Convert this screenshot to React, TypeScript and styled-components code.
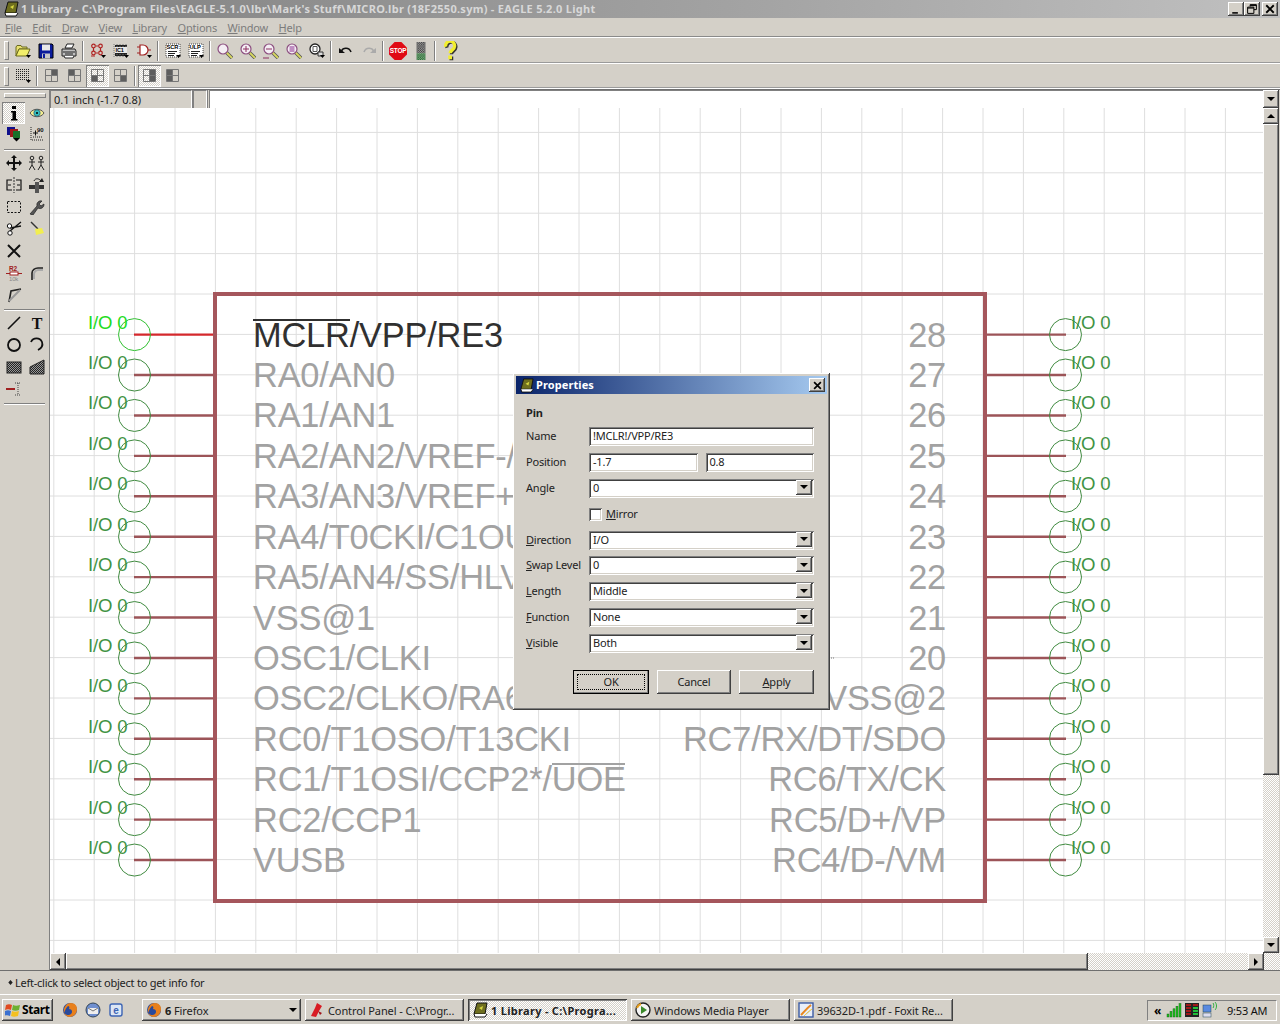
import React, { FunctionComponent, ReactNode } from 'react';
import styled, { createGlobalStyle, css } from 'styled-components';

const FACE = '#d4d0c8';
const UI_FONT = '"Noto Sans", "DejaVu Sans", sans-serif';

const raised = css`
  box-shadow: inset -1px -1px #404040, inset 1px 1px #fff, inset -2px -2px #808080, inset 2px 2px ${FACE};
`;
const sunken = css`
  box-shadow: inset 1px 1px #808080, inset -1px -1px #fff, inset 2px 2px #404040, inset -2px -2px ${FACE};
`;
const dither = css`
  background: repeating-conic-gradient(#fff 0 25%, ${FACE} 0 50%) 0 0 / 2px 2px;
`;

const GlobalStyle = createGlobalStyle`
  html, body {
    margin: 0;
    padding: 0;
    background: ${FACE};
  }
  * {
    box-sizing: border-box;
  }
`;

const Screen = styled.div`
  width: 1280px;
  height: 1024px;
  display: flex;
  flex-direction: column;
  overflow: hidden;
  background: ${FACE};
  font: 11px ${UI_FONT};
  letter-spacing: -0.2px;
  color: #222;
`;

/* title and menu */

const TitleBar = styled.div`
  height: 18px;
  flex: none;
  display: flex;
  align-items: center;
  padding: 0 2px 0 3px;
  background: linear-gradient(90deg, #808080 0%, #a4a4a4 60%, #c0c0c0 100%);
`;

const TitleText = styled.span`
  flex: 1;
  margin-left: 2px;
  padding-bottom: 1px;
  color: #d8d8d8;
  font-weight: 700;
  letter-spacing: 0.28px;
  white-space: nowrap;
`;

const CaptionButton = styled.div<{ $gap?: number }>`
  width: 16px;
  height: 14px;
  margin-left: ${({ $gap }) => $gap ?? 0}px;
  display: flex;
  align-items: center;
  justify-content: center;
  background: ${FACE};
  ${raised};
`;

const MenuBar = styled.div`
  height: 20px;
  flex: none;
  display: flex;
  align-items: center;
  padding-left: 5px;
  gap: 10.5px;
  color: #7c7c7c;
  border-bottom: 1px solid #fff;
  box-shadow: inset 0 -1px #8a8a8a;
`;

const ToolRow = styled.div<{ $height: number }>`
  height: ${({ $height }) => $height}px;
  flex: none;
  display: flex;
  align-items: center;
  padding-left: 4px;
  border-bottom: 1px solid #fff;
  box-shadow: inset 0 -1px #9a9a9a;
`;

const Grip = styled.div`
  width: 5px;
  height: 19px;
  margin-right: 2px;
  border: 1px solid;
  border-color: #fff #808080 #808080 #fff;
`;

const ToolButton = styled.div<{ $pressed?: boolean }>`
  width: 23px;
  height: 22px;
  flex: none;
  display: flex;
  align-items: center;
  justify-content: center;
  ${({ $pressed }) =>
    $pressed &&
    css`
      ${dither};
      box-shadow: inset 1px 1px #808080, inset -1px -1px #fff;
    `}
`;

const ToolSep = styled.div`
  width: 2px;
  height: 20px;
  margin: 0 2px;
  flex: none;
  border-left: 1px solid #808080;
  border-right: 1px solid #fff;
`;

const Ico = styled.svg.attrs({ viewBox: '0 0 16 16' })<{ $size?: number }>`
  width: ${({ $size }) => $size ?? 16}px;
  height: ${({ $size }) => $size ?? 16}px;
  flex: none;
  display: block;
`;

/* main area */

const MainArea = styled.div`
  flex: 1;
  display: flex;
  min-height: 0;
  border-top: 1px solid #6f6f6f;
`;

const SideBar = styled.div`
  width: 50px;
  flex: none;
  display: flex;
  flex-direction: column;
  align-items: stretch;
  padding-top: 3px;
  border-right: 1px solid #808080;
`;

const SideGrip = styled.div`
  height: 5px;
  margin: 0 3px 4px 4px;
  border: 1px solid;
  border-color: #fff #808080 #808080 #fff;
`;

const SideGrid = styled.div<{ $rowHeight: number; $after?: number }>`
  display: grid;
  grid-template-columns: 23px 23px;
  grid-auto-rows: ${({ $rowHeight }) => $rowHeight}px;
  padding-left: 2px;
  margin-bottom: ${({ $after }) => $after ?? 0}px;
`;

const SideSep = styled.div`
  height: 2px;
  margin: 3px 4px 1px;
  border-top: 1px solid #808080;
  border-bottom: 1px solid #fff;
`;

const DrawColumn = styled.div`
  flex: 1;
  min-width: 0;
  display: flex;
  flex-direction: column;
`;

const CommandRow = styled.div`
  height: 18px;
  flex: none;
  display: flex;
  padding-right: 1px;
`;

const CoordBox = styled.div<{ $width: number }>`
  width: ${({ $width }) => $width}px;
  flex: none;
  padding: 1px 0 0 3px;
  letter-spacing: 0;
  border-top: 1px solid #808080;
  border-left: 1px solid #808080;
  border-right: 1px solid #fff;
  box-shadow: 1px 0 #808080;
  margin-right: 1px;
  white-space: nowrap;
`;

const CommandInput = styled.div`
  flex: 1;
  background: #fff;
  border-top: 1px solid #808080;
  border-left: 1px solid #808080;
  margin-left: 1px;
`;

const ArrowButton = styled.div<{ $w?: number; $h?: number }>`
  width: ${({ $w }) => $w ?? 16}px;
  height: ${({ $h }) => $h ?? 16}px;
  flex: none;
  display: flex;
  align-items: center;
  justify-content: center;
  background: ${FACE};
  ${raised};
`;

const Arrow = styled.div<{ $dir: 'up' | 'down' | 'left' | 'right' }>`
  width: 0;
  height: 0;
  flex: none;
  border: 4px solid transparent;
  ${({ $dir }) =>
    $dir === 'up'
      ? 'border-bottom-color:#000;border-top-width:0;'
      : $dir === 'down'
      ? 'border-top-color:#000;border-bottom-width:0;'
      : $dir === 'left'
      ? 'border-right-color:#000;border-left-width:0;'
      : 'border-left-color:#000;border-right-width:0;'}
`;

const CanvasRow = styled.div`
  flex: 1;
  display: flex;
  min-height: 0;
  padding-right: 1px;
`;

const Canvas = styled.div`
  position: relative;
  flex: 1;
  min-width: 0;
  background: #fff;
`;

const SchematicSvg = styled.svg`
  position: absolute;
  inset: 0;
  width: 100%;
  height: 100%;
  display: block;
`;

const VScroll = styled.div`
  width: 16px;
  flex: none;
  display: flex;
  flex-direction: column;
  ${dither};
`;

const VThumb = styled.div`
  height: 651px;
  flex: none;
  background: ${FACE};
  ${raised};
`;

const ScrollFill = styled.div`
  flex: 1;
`;

const HScroll = styled.div`
  height: 17px;
  flex: none;
  display: flex;
  padding-right: 16px;
  ${dither};
  background-color: ${FACE};
`;

const HThumb = styled.div`
  width: 1022px;
  flex: none;
  background: ${FACE};
  ${raised};
`;

const StatusBar = styled.div`
  height: 25px;
  flex: none;
  display: flex;
  align-items: center;
  padding-left: 8px;
  gap: 2px;
  letter-spacing: -0.25px;
  border-top: 1px solid #6f6f6f;
  border-bottom: 1px solid #fff;
`;

/* dialog */

const Dialog = styled.div`
  position: absolute;
  left: 463px;
  top: 265px;
  width: 317px;
  height: 337px;
  padding: 3px;
  background: ${FACE};
  ${raised};
`;

const DialogTitle = styled.div`
  height: 18px;
  display: flex;
  align-items: center;
  padding: 0 2px 0 3px;
  gap: 2px;
  color: #fff;
  font-weight: 700;
  letter-spacing: 0.1px;
  background: linear-gradient(90deg, #0a246a, #a6caf0);
`;

const DialogTitleText = styled.span`
  flex: 1;
  padding-bottom: 1px;
`;

const DialogBody = styled.div`
  padding: 12px 13px 0 10px;
`;

const GroupLabel = styled.div`
  height: 14px;
  font-weight: 700;
  line-height: 14px;
  margin-bottom: 7px;
`;

const FormGrid = styled.div`
  display: grid;
  grid-template-columns: 63px 1fr;
  grid-auto-rows: 19px;
  row-gap: 6.875px;
  align-items: center;
`;

const FieldLabel = styled.div`
  padding-bottom: 2px;
  white-space: nowrap;
`;

const FieldPair = styled.div`
  display: flex;
  gap: 8px;
`;

const TextField = styled.div`
  flex: 1;
  height: 19px;
  padding: 1px 0 0 4px;
  line-height: 15px;
  background: #fff;
  white-space: nowrap;
  ${sunken};
`;

const SelectField = styled(TextField)`
  display: flex;
  justify-content: space-between;
  padding: 1px 2px 2px 4px;
`;

const CheckRow = styled.div`
  grid-column: 2;
  display: flex;
  align-items: center;
  gap: 4px;
`;

const CheckBox = styled.div`
  width: 13px;
  height: 13px;
  background: #fff;
  ${sunken};
`;

const CheckText = styled.span`
  padding-bottom: 2px;
`;

const ButtonRow = styled.div`
  display: flex;
  justify-content: flex-end;
  gap: 8px;
  margin-top: 17px;
`;

const PushButton = styled.div<{ $width: number; $default?: boolean }>`
  position: relative;
  width: ${({ $width }) => $width}px;
  height: 24px;
  display: flex;
  align-items: center;
  justify-content: center;
  padding-bottom: 2px;
  background: ${FACE};
  ${raised};
  ${({ $default }) =>
    $default &&
    css`
      outline: 1px solid #000;
      outline-offset: -1px;
      &::after {
        content: '';
        position: absolute;
        inset: 4px;
        border: 1px dotted #000;
      }
    `}
`;

/* taskbar */

const TaskBar = styled.div`
  height: 29px;
  flex: none;
  display: flex;
  align-items: center;
  padding: 1px 3px 0 2px;
  gap: 4px;
`;

const StartButton = styled.div`
  width: 51px;
  height: 22px;
  flex: none;
  display: flex;
  align-items: center;
  gap: 1px;
  padding: 0 0 1px 3px;
  font-weight: 700;
  font-size: 12px;
  letter-spacing: -0.4px;
  color: #000;
  background: ${FACE};
  ${raised};
`;

const QuickLaunch = styled.div`
  width: 81px;
  flex: none;
  display: flex;
  align-items: center;
  gap: 7px;
  padding-left: 5px;
`;

const TaskButton = styled.div<{ $active?: boolean }>`
  width: 159px;
  height: 22px;
  flex: none;
  display: flex;
  align-items: center;
  gap: 3px;
  padding: 0 4px;
  letter-spacing: -0.1px;
  white-space: nowrap;
  overflow: hidden;
  ${({ $active }) =>
    $active
      ? css`
          ${dither};
          font-weight: 700;
          letter-spacing: 0.3px;
          box-shadow: inset 1px 1px #404040, inset -1px -1px #fff, inset 2px 2px #808080;
        `
      : css`
          background: ${FACE};
          ${raised};
        `}
`;

const TaskLabel = styled.span`
  flex: 1;
  overflow: hidden;
`;

const Tray = styled.div`
  margin-left: auto;
  width: 130px;
  height: 21px;
  flex: none;
  display: flex;
  align-items: center;
  padding-left: 6px;
  gap: 2px;
  border: 1px solid;
  border-color: #808080 #fff #fff #808080;
`;

const TrayChevron = styled.span`
  width: 10px;
  font-weight: 700;
  font-size: 12px;
  color: #000;
`;

const Clock = styled.span`
  margin-left: 7px;
  color: #111;
  white-space: nowrap;
`;

/* icons */

const Drop = () => <path d="M11 12h5l-2.5 3z" fill="#000" />;

const Checker: FunctionComponent<{ id: string; dark: string; light: string }> = ({ id, dark, light }) => (
  <defs>
    <pattern id={id} width="2" height="2" patternUnits="userSpaceOnUse">
      <rect width="2" height="2" fill={light} />
      <rect width="1" height="1" fill={dark} />
      <rect x="1" y="1" width="1" height="1" fill={dark} />
    </pattern>
  </defs>
);

const FolderIcon = () => (
  <Ico>
    <path d="M1 4l1-1.5h4L7 4h5v2H4L1 13z" fill="#e8e070" stroke="#6a6a20" />
    <path d="M1 13l3-7h11l-3 7z" fill="#f2ee6a" stroke="#6a6a20" />
    <Drop />
  </Ico>
);
const SaveIcon = () => (
  <Ico>
    <path d="M1 1h13l1 1v13H1z" fill="#0c1c9c" stroke="#000" />
    <path d="M4 1.5h8v6H4z" fill="#e8e8e8" />
    <path d="M4 10.5h8v5H4z" fill="#c8c8c8" />
    <path d="M5 11h2v4H5z" fill="#0c1c9c" />
  </Ico>
);
const PrintIcon = () => (
  <Ico>
    <path d="M4 5l2-4h7l-2 4z" fill="#fff" stroke="#222" />
    <path d="M1 6h13l1 2v5H1z" fill="#c0c0c0" stroke="#222" />
    <path d="M2 9h12M4 11h8" stroke="#222" />
    <path d="M3 13l1 2h8l1-2" fill="#fff" stroke="#222" />
  </Ico>
);
const PartsIcon = () => (
  <Ico>
    <g fill="none" stroke="#b02020" strokeWidth="1.2">
      <circle cx="3.5" cy="3" r="1.8" />
      <circle cx="3.5" cy="10" r="1.8" />
      <circle cx="10.5" cy="3" r="1.8" />
      <circle cx="10.5" cy="10" r="1.8" />
      <path d="M6 3h2M6 10h2M3.5 5v3M10.5 5v3M1 13h4" />
    </g>
    <Drop />
  </Ico>
);
const ChipIcon = () => (
  <Ico>
    <path d="M2 2h12v11H2z" fill="#222" />
    <path d="M1 1v14M4 1v14M7 1v14M10 1v14M13 1v14" stroke="#777" strokeDasharray="1 1" />
    <path d="M2 4h12v6H2z" fill="#e8e8e8" />
    <text x="2.6" y="9" fontSize="5.5" fontWeight="700" fontFamily="Liberation Sans" fill="#000">IC1</text>
    <Drop />
  </Ico>
);
const GateIcon = () => (
  <Ico>
    <path d="M4 2h3a5 5 0 010 10H4z" fill="#fff" stroke="#a02020" strokeWidth="1.2" />
    <path d="M1 4h3M1 10h3M12 7h3" stroke="#a02020" />
    <Drop />
  </Ico>
);
const DocIcon: FunctionComponent<{ label: string }> = ({ label }) => (
  <Ico>
    <path d="M1 1h14v13H1z" fill="#fff" stroke="#444" strokeDasharray="1 1" />
    <text x="1.6" y="6.4" fontSize="5.8" fontWeight="700" fontFamily="Liberation Sans" fill="#000">{label}</text>
    <path d="M3 8.5h9M3 10.5h7M3 12.5h6" stroke="#222" />
    <Drop />
  </Ico>
);
const Lens: FunctionComponent<{ children?: ReactNode }> = ({ children }) => (
  <Ico>
    <path d="M9.5 9.5L15 15" stroke="#555" strokeWidth="3.4" />
    <path d="M9.5 9.5L15 15" stroke="#d8d860" strokeWidth="1.8" />
    <circle cx="6" cy="6" r="5" fill="#f4eef4" stroke="#8c4f80" strokeWidth="1.2" />
    {children}
  </Ico>
);
const SelectZoomIcon = () => (
  <Ico>
    <circle cx="6" cy="6" r="5" fill="#fff" stroke="#222" strokeWidth="1.3" />
    <path d="M4 3.5h4v5H4z" fill="none" stroke="#555" />
    <path d="M9 9h5v4H9z" fill="#ddd" stroke="#333" />
    <Drop />
  </Ico>
);
const UndoIcon = () => (
  <Ico>
    <path d="M3.5 8C5 4.5 11 4 13 9" fill="none" stroke="#111" strokeWidth="1.6" />
    <path d="M1 5l6 5H1z" fill="#111" />
  </Ico>
);
const RedoIcon = () => (
  <Ico>
    <path d="M12.5 8C11 4.5 5 4 3 9" fill="none" stroke="#aaa" strokeWidth="1.6" />
    <path d="M15 5l-6 5h6z" fill="#aaa" />
  </Ico>
);
const StopIcon = () => (
  <Ico $size={18}>
    <path d="M5 0h6l5 5v6l-5 5H5l-5-5V5z" fill="#e00a14" />
    <text x="8" y="10" textAnchor="middle" fontSize="5.8" fontWeight="700" fontFamily="Liberation Sans" fill="#fff">STOP</text>
  </Ico>
);
const DitherSignalIcon = () => (
  <Ico $size={18}>
    <Checker id="signal-top" dark="#333" light="#aaa" />
    <Checker id="signal-bottom" dark="#1c5c2c" light="#8ab88a" />
    <path d="M4 0h8v10H4z" fill="url(#signal-top)" />
    <path d="M4 10h8v6H4z" fill="url(#signal-bottom)" />
  </Ico>
);
const HelpIcon = () => (
  <Ico $size={20}>
    <g fill="none" strokeWidth="2.6">
      <path d="M5.6 5.4a3.6 3.6 0 117 0c0 2.4-3.5 2.6-3.5 5.2" stroke="#333" />
      <path d="M4.6 4.6a3.6 3.6 0 117 0c0 2.4-3.5 2.6-3.5 5.2" stroke="#f2ee30" />
    </g>
    <rect x="7.6" y="12.4" width="3" height="3" fill="#333" />
    <rect x="6.6" y="11.6" width="3" height="3" fill="#f2ee30" />
  </Ico>
);
const GridIcon = () => (
  <Ico>
    {[0, 1, 2, 3, 4, 5].map(r =>
      [0, 1, 2, 3, 4, 5, 6].map(c => <rect key={`${r}-${c}`} x={1 + c * 2} y={1 + r * 2} width="1" height="1" fill="#222" />)
    )}
    <Drop />
  </Ico>
);
const QuadIcon: FunctionComponent<{ fill: string }> = ({ fill }) => (
  <Ico>
    <path d={fill} fill="#5e5e5e" />
    <path d="M1.5 1.5h12v12h-12zM7.5 1.5v12M1.5 7.5h12" fill="none" stroke="#777" />
  </Ico>
);

const InfoIcon = () => (
  <Ico>
    <rect x="6" y="1" width="4" height="3" fill="#000" />
    <path d="M5 6h5v8h1.5v1.5h-6.5V14H6.5V7.5H5z" fill="#000" />
  </Ico>
);
const EyeIcon = () => (
  <Ico>
    <path d="M1 8c3-5 11-5 14 0-3 5-11 5-14 0z" fill="#f4ee90" stroke="#555" />
    <circle cx="8" cy="8" r="3.2" fill="#36c0c0" stroke="#246" strokeWidth=".6" />
    <circle cx="8" cy="8" r="1" fill="#000" />
  </Ico>
);
const LayersIcon = () => (
  <Ico>
    <rect x="1" y="1" width="8" height="8" fill="#10108c" />
    <rect x="4" y="3" width="8" height="8" fill="#9c1818" />
    <rect x="7" y="5" width="7" height="7" fill="#187028" />
    <path d="M7 12h7l-3.5 3.5z" fill="#000" />
  </Ico>
);
const CoordsIcon = () => (
  <Ico>
    <path d="M2 1v13h13" fill="none" stroke="#222" strokeDasharray="1 1" />
    <path d="M4 7h5M6.5 4.5v5" stroke="#111" />
    <text x="8" y="5.5" fontSize="6" fontWeight="700" fontFamily="Liberation Sans" fill="#111">90</text>
    <path d="M4 11h9" stroke="#222" strokeDasharray="1 1" />
  </Ico>
);
const MoveIcon = () => (
  <Ico>
    <path d="M8 0l3 3H9v4h4V5l3 3-3 3V9H9v4h2l-3 3-3-3h2V9H3v2L0 8l3-3v2h4V3H5z" fill="#111" />
  </Ico>
);
const CopyIcon = () => (
  <Ico>
    {[3, 12].map(x => (
      <g key={x} fill="none" stroke="#222">
        <circle cx={x} cy="3" r="1.8" />
        <path d={`M${x} 5v5M${x - 3} 7h6M${x} 10l-3 5M${x} 10l3 5`} />
      </g>
    ))}
  </Ico>
);
const MirrorIcon = () => (
  <Ico>
    <path d="M8 0v16" stroke="#333" strokeDasharray="2 1" />
    <path d="M6 3H1v10h5M2 8h3" fill="none" stroke="#111" strokeWidth="1.2" />
    <path d="M10 3h5v10h-5M14 8h-3" fill="none" stroke="#111" strokeWidth="1.2" />
  </Ico>
);
const RotateIcon = () => (
  <Ico>
    <path d="M0 8h15v4H0z" fill="#333" />
    <path d="M6 5h4v11H6z" fill="#555" />
    <path d="M5 4C6 1 10 1 12 4" fill="none" stroke="#222" />
    <path d="M10 5h5l-2-4z" fill="#222" />
  </Ico>
);
const GroupIcon = () => (
  <Ico>
    <rect x="1.5" y="2.5" width="13" height="11" fill="none" stroke="#111" strokeDasharray="2 1.5" />
  </Ico>
);
const WrenchIcon = () => (
  <Ico>
    <path d="M1 15l7-8a4 4 0 015-5l-3 3 2 2 3-2a4 4 0 01-6 4l-5 7z" fill="#555" stroke="#222" strokeWidth=".7" />
  </Ico>
);
const CutIcon = () => (
  <Ico>
    <path d="M15 1L4 10M15 5L4 7" stroke="#111" strokeWidth="1.3" />
    <circle cx="3.5" cy="5" r="2.2" fill="#fff" stroke="#111" />
    <circle cx="4" cy="12" r="2.2" fill="#fff" stroke="#111" />
  </Ico>
);
const PaintIcon = () => (
  <Ico>
    <path d="M2 1l7 7" stroke="#333" strokeWidth="1.4" />
    <path d="M6 8l7-1 2 5-8 2z" fill="#f2ee50" />
  </Ico>
);
const DeleteIcon = () => (
  <Ico>
    <path d="M2 2l12 12M14 2L2 14" stroke="#111" strokeWidth="2" />
  </Ico>
);
const ValueIcon = () => (
  <Ico>
    <text x="3" y="6" fontSize="6.5" fontWeight="700" fontFamily="Liberation Sans" fill="#a02020">R2</text>
    <path d="M0 8.5h4M12 8.5h4" stroke="#a02020" />
    <rect x="4" y="7" width="8" height="3" fill="#fff" stroke="#a02020" />
    <text x="3" y="15.5" fontSize="6" fontFamily="Liberation Sans" fill="#888">10k</text>
  </Ico>
);
const MiterIcon = () => (
  <Ico>
    <path d="M3 15V8c0-3 3-5 6-5h5" fill="none" stroke="#222" strokeWidth="1.6" />
    <path d="M5 14V9c0-2 2-4 4-4h5" fill="none" stroke="#aaa" strokeWidth="2" />
  </Ico>
);
const SplitIcon = () => (
  <Ico>
    <path d="M3 15L5 4l10-2" fill="none" stroke="#222" strokeWidth="1.6" />
    <path d="M3 14L14 3" stroke="#999" strokeWidth="2" />
  </Ico>
);
const LineIcon = () => (
  <Ico>
    <path d="M2 14L14 2" stroke="#111" strokeWidth="1.6" />
  </Ico>
);
const TextIcon = () => (
  <Ico>
    <text x="8" y="14" textAnchor="middle" fontSize="16" fontWeight="700" fontFamily="Liberation Serif" fill="#111">T</text>
  </Ico>
);
const CircleIcon = () => (
  <Ico>
    <circle cx="8" cy="8" r="6" fill="none" stroke="#111" strokeWidth="1.8" />
  </Ico>
);
const ArcIcon = () => (
  <Ico>
    <path d="M2 5a6 6 0 0111 0c1 3 0 6-4 8" fill="none" stroke="#111" strokeWidth="1.8" />
  </Ico>
);
const RectIcon = () => (
  <Ico>
    <Checker id="rect-fill" dark="#222" light="#999" />
    <rect x="1" y="3" width="14" height="11" fill="url(#rect-fill)" stroke="#222" />
  </Ico>
);
const PolygonIcon = () => (
  <Ico>
    <Checker id="poly-fill" dark="#222" light="#999" />
    <path d="M1 15V8l6-3 8-4v14z" fill="url(#poly-fill)" stroke="#222" />
  </Ico>
);
const PinIcon = () => (
  <Ico>
    <path d="M0 8h9" stroke="#a02020" strokeWidth="2" />
    <path d="M9 2h5M12 2v12M9 14h5" stroke="#444" strokeDasharray="1 1" fill="none" />
  </Ico>
);

const EagleIcon: FunctionComponent<{ size?: number }> = ({ size }) => (
  <Ico $size={size}>
    <path d="M5 1h10l-2 11H2z" fill="#6e6e1e" stroke="#111" />
    <path d="M2 12l1 3h10l2-3" fill="#fff" stroke="#111" />
    <path d="M7 6l4-2-1 4z" fill="#d8d840" />
  </Ico>
);
const FlagIcon = () => (
  <Ico>
    <path d="M1 3c2-1 4-1 6 0l-1 5C4 7 2 7 0 8z" fill="#e04a20" />
    <path d="M8 3c2 1 4 1 7 0l-1 5c-2 1-5 1-7 0z" fill="#6cb030" />
    <path d="M0 9c2-1 4-1 6 0l-1 5c-2-1-4-1-6 0z" fill="#3a70d0" />
    <path d="M7 9c2 1 4 1 7 0l-1 5c-3 1-5 1-7 0z" fill="#f4c020" />
  </Ico>
);
const FirefoxIcon = () => (
  <Ico>
    <circle cx="8" cy="8" r="7" fill="#2a4a9c" />
    <path d="M2 11C1 6 4 1 9 1c4 0 6 3 6 6 0 5-4 8-7 8-3 0-5-2-6-4 2 2 5 3 7 1 2-2 1-5-2-5 1-2 0-3-1-3-2 2-3 4-4 7z" fill="#e8801c" />
  </Ico>
);
const MailIcon = () => (
  <Ico>
    <circle cx="8" cy="8" r="7" fill="#6f8fd0" stroke="#345" />
    <path d="M3 6h10v6H3z" fill="#eee" />
    <path d="M3 6l5 3 5-3" fill="none" stroke="#777" />
  </Ico>
);
const PageIcon = () => (
  <Ico>
    <rect x="2" y="2" width="12" height="12" rx="2" fill="#dce6f4" stroke="#3c64b4" strokeWidth="1.4" />
    <text x="8" y="12" textAnchor="middle" fontSize="10" fontWeight="700" fontFamily="Liberation Sans" fill="#3c64b4">e</text>
  </Ico>
);
const ControlIcon = () => (
  <Ico>
    <path d="M2 14l4-8 2-5 5 3-3 5-3 6z" fill="#d81c24" />
    <path d="M9 9l4 2-2 2z" fill="#a01018" />
  </Ico>
);
const MediaIcon = () => (
  <Ico>
    <circle cx="8" cy="8" r="7" fill="#f4f4f4" stroke="#222" strokeWidth="1.4" />
    <path d="M6 4l6 4-6 4z" fill="#3a8a2a" />
    <path d="M2 6a6 6 0 014-4" fill="none" stroke="#e8a020" strokeWidth="2" />
  </Ico>
);
const FoxitIcon = () => (
  <Ico>
    <rect x="1" y="1" width="14" height="14" fill="#e8eef8" stroke="#3c5ca4" strokeWidth="1.4" />
    <path d="M3 13C6 10 9 6 13 3" stroke="#e88820" strokeWidth="2" />
    <path d="M6 14c2-2 5-5 8-7" stroke="#f4d040" />
  </Ico>
);
const SignalIcon = () => (
  <Ico>
    {[0, 1, 2, 3, 4].map(i => (
      <rect key={i} x={1 + i * 3} y={12 - i * 2.6} width="2" height={3 + i * 2.6} fill="#22c022" stroke="#0a5a0a" strokeWidth=".4" />
    ))}
  </Ico>
);
const MeterIcon = () => (
  <Ico>
    <rect x="1" y="1" width="14" height="14" fill="#222" />
    {[2, 5, 8, 11].map(y => (
      <g key={y}>
        <rect x="2" y={y} width="5" height="2" fill="#a01818" />
        <rect x="9" y={y} width="5" height="2" fill={y > 3 ? '#22c03a' : '#a01818'} />
      </g>
    ))}
  </Ico>
);
const NetIcon = () => (
  <Ico>
    <rect x="1" y="3" width="8" height="7" fill="#5a8ae0" stroke="#245" strokeWidth=".5" />
    <rect x="1" y="11" width="8" height="4" fill="#dde" stroke="#245" strokeWidth=".5" />
    <path d="M11 1c1 1 1 4 0 5M13 0c2 2 2 6 0 8" fill="none" stroke="#30b040" />
  </Ico>
);

/* schematic data */

const GRID_X = Array.from({ length: 31 }, (_, i) => 53.8 + i * 40.4);
const GRID_Y = Array.from({ length: 21 }, (_, i) => 132.4 + i * 40.4);

const LEFT_NAMES = [
  'MCLR/VPP/RE3',
  'RA0/AN0',
  'RA1/AN1',
  'RA2/AN2/VREF-/',
  'RA3/AN3/VREF+',
  'RA4/T0CKI/C1OU',
  'RA5/AN4/SS/HLV',
  'VSS@1',
  'OSC1/CLKI',
  'OSC2/CLKO/RA6',
  'RC0/T1OSO/T13CKI',
  'RC1/T1OSI/CCP2*/UOE',
  'RC2/CCP1',
  'VUSB',
];

const RIGHT_NAMES = [
  '28', '27', '26', '25', '24', '23', '22', '21', '20',
  'VSS@2', 'RC7/RX/DT/SDO', 'RC6/TX/CK', 'RC5/D+/VP', 'RC4/D-/VM',
];

const PIN_Y = LEFT_NAMES.map((_, i) => 334.6 + i * 40.42);

const Schematic = () => (
  <SchematicSvg viewBox="50 108 1213 845" fontFamily="Liberation Sans, Arial, sans-serif">
    {GRID_X.map(x => (
      <line key={x} x1={x} x2={x} y1={108} y2={953} stroke="#dedede" />
    ))}
    {GRID_Y.map(y => (
      <line key={y} x1={50} x2={1263} y1={y} y2={y} stroke="#dedede" />
    ))}
    {PIN_Y.map((y, i) => (
      <g key={y}>
        <line x1={134} x2={215} y1={y} y2={y} stroke={i === 0 ? '#d4282c' : '#9c5458'} strokeWidth="2.4" />
        <line x1={985} x2={1066} y1={y} y2={y} stroke="#9c5458" strokeWidth="2.4" />
        <circle cx={134.5} cy={y} r={16} fill="none" stroke={i === 0 ? '#30c030' : '#3f8a3f'} />
        <circle cx={1065.5} cy={y} r={16} fill="none" stroke="#3f8a3f" />
        <text x={88} y={y - 6} fontSize="18.6" fill={i === 0 ? '#22dc22' : '#3f9344'}>I/O 0</text>
        <text x={1071} y={y - 6} fontSize="18.6" fill="#3f9344">I/O 0</text>
        <text x={253} y={y + 12} fontSize="34.4" fill={i === 0 ? '#303030' : '#a2a2a2'}>{LEFT_NAMES[i]}</text>
        <text x={946} y={y + 12} fontSize="34.4" fill="#a2a2a2" textAnchor="end">{RIGHT_NAMES[i]}</text>
      </g>
    ))}
    <rect x={215} y={294} width={770} height={607} fill="none" stroke="#a5565c" strokeWidth="4" />
    <line x1={253} x2={350} y1={320} y2={320} stroke="#303030" strokeWidth="2" />
    <line x1={552} x2={625} y1={764} y2={764} stroke="#a2a2a2" strokeWidth="2" />
    <line x1={829} x2={834} y1={658} y2={658} stroke="#777" strokeDasharray="1 1" />
  </SchematicSvg>
);

const SELECTS: { label: ReactNode; value: string }[] = [
  { label: <><u>D</u>irection</>, value: 'I/O' },
  { label: <><u>S</u>wap Level</>, value: '0' },
  { label: <><u>L</u>ength</>, value: 'Middle' },
  { label: <><u>F</u>unction</>, value: 'None' },
  { label: <><u>V</u>isible</>, value: 'Both' },
];

const Select: FunctionComponent<{ value: string }> = ({ value }) => (
  <SelectField>
    {value}
    <ArrowButton $h={15}>
      <Arrow $dir="down" />
    </ArrowButton>
  </SelectField>
);

const PropertiesDialog = () => (
  <Dialog>
    <DialogTitle>
      <EagleIcon size={15} />
      <DialogTitleText>Properties</DialogTitleText>
      <CaptionButton>
        <Ico $size={9}>
          <path d="M2 2l12 12M14 2L2 14" stroke="#000" strokeWidth="3" />
        </Ico>
      </CaptionButton>
    </DialogTitle>
    <DialogBody>
      <GroupLabel>Pin</GroupLabel>
      <FormGrid>
        <FieldLabel>Name</FieldLabel>
        <TextField>!MCLR!/VPP/RE3</TextField>
        <FieldLabel>Position</FieldLabel>
        <FieldPair>
          <TextField>-1.7</TextField>
          <TextField>0.8</TextField>
        </FieldPair>
        <FieldLabel>Angle</FieldLabel>
        <Select value="0" />
        <CheckRow>
          <CheckBox />
          <CheckText>
            <u>M</u>irror
          </CheckText>
        </CheckRow>
        {SELECTS.map(({ value, label }, i) => (
          <React.Fragment key={i}>
            <FieldLabel>{label}</FieldLabel>
            <Select value={value} />
          </React.Fragment>
        ))}
      </FormGrid>
      <ButtonRow>
        <PushButton $width={76} $default>OK</PushButton>
        <PushButton $width={74}>Cancel</PushButton>
        <PushButton $width={75}>
          <span>
            <u>A</u>pply
          </span>
        </PushButton>
      </ButtonRow>
    </DialogBody>
  </Dialog>
);

const MENUS: [string, string][] = [
  ['F', 'ile'],
  ['E', 'dit'],
  ['D', 'raw'],
  ['V', 'iew'],
  ['L', 'ibrary'],
  ['O', 'ptions'],
  ['W', 'indow'],
  ['H', 'elp'],
];

const SIDE_TOP: ReactNode[] = [<EyeIcon key="e" />, <LayersIcon key="l" />, <CoordsIcon key="c" />];
const SIDE_EDIT: ReactNode[] = [
  <MoveIcon key="1" />, <CopyIcon key="2" />, <MirrorIcon key="3" />, <RotateIcon key="4" />,
  <GroupIcon key="5" />, <WrenchIcon key="6" />, <CutIcon key="7" />, <PaintIcon key="8" />,
  <DeleteIcon key="9" />, <span key="10" />, <ValueIcon key="11" />, <MiterIcon key="12" />,
  <SplitIcon key="13" />, <span key="14" />,
];
const SIDE_DRAW: ReactNode[] = [
  <LineIcon key="1" />, <TextIcon key="2" />, <CircleIcon key="3" />, <ArcIcon key="4" />,
  <RectIcon key="5" />, <PolygonIcon key="6" />, <PinIcon key="7" />,
];

const App = () => (
  <Screen>
    <GlobalStyle />
    <TitleBar>
      <EagleIcon />
      <TitleText>1 Library - C:\Program Files\EAGLE-5.1.0\lbr\Mark's Stuff\MICRO.lbr (18F2550.sym) - EAGLE 5.2.0 Light</TitleText>
      <CaptionButton>
        <Ico $size={10}><path d="M2 13h9v2.5H2z" fill="#000" /></Ico>
      </CaptionButton>
      <CaptionButton>
        <Ico $size={10}><path d="M5 4V1h10v8h-4M1 5h10v10H1zM1 6.5h10M5 2.5h10" fill="none" stroke="#000" strokeWidth="1.6" /></Ico>
      </CaptionButton>
      <CaptionButton $gap={2}>
        <Ico $size={10}><path d="M2 2l12 12M14 2L2 14" stroke="#000" strokeWidth="3" /></Ico>
      </CaptionButton>
    </TitleBar>
    <MenuBar>
      {MENUS.map(([key, rest]) => (
        <span key={key}>
          <u>{key}</u>
          {rest}
        </span>
      ))}
    </MenuBar>
    <ToolRow $height={26}>
      <Grip />
      <ToolButton><FolderIcon /></ToolButton>
      <ToolButton><SaveIcon /></ToolButton>
      <ToolButton><PrintIcon /></ToolButton>
      <ToolSep />
      <ToolButton><PartsIcon /></ToolButton>
      <ToolButton><ChipIcon /></ToolButton>
      <ToolButton><GateIcon /></ToolButton>
      <ToolSep />
      <ToolButton><DocIcon label="SCR" /></ToolButton>
      <ToolButton><DocIcon label="ULP" /></ToolButton>
      <ToolSep />
      <ToolButton><Lens /></ToolButton>
      <ToolButton>
        <Lens><path d="M3 6h6M6 3v6" stroke="#8c2f60" /></Lens>
      </ToolButton>
      <ToolButton>
        <Lens><path d="M3 6h6" stroke="#8c2f60" /><path d="M0 15h6" stroke="#8c2f60" /></Lens>
      </ToolButton>
      <ToolButton>
        <Lens><path d="M3.5 4h5M3.5 6h5M3.5 8h5" stroke="#8c2f90" /></Lens>
      </ToolButton>
      <ToolButton><SelectZoomIcon /></ToolButton>
      <ToolSep />
      <ToolButton><UndoIcon /></ToolButton>
      <ToolButton><RedoIcon /></ToolButton>
      <ToolSep />
      <ToolButton><StopIcon /></ToolButton>
      <ToolButton><DitherSignalIcon /></ToolButton>
      <ToolSep />
      <ToolButton><HelpIcon /></ToolButton>
    </ToolRow>
    <ToolRow $height={25}>
      <Grip />
      <ToolButton><GridIcon /></ToolButton>
      <ToolSep />
      <ToolButton><QuadIcon fill="M8 2h5v5H8z" /></ToolButton>
      <ToolButton><QuadIcon fill="M2 2h5v5H2z" /></ToolButton>
      <ToolButton $pressed><QuadIcon fill="M2 8h5v5H2z" /></ToolButton>
      <ToolButton><QuadIcon fill="M8 8h5v5H8z" /></ToolButton>
      <ToolSep />
      <ToolButton $pressed><QuadIcon fill="M8 2h5v11H8z" /></ToolButton>
      <ToolButton><QuadIcon fill="M2 2h5v11H2z" /></ToolButton>
    </ToolRow>
    <MainArea>
      <SideBar>
        <SideGrip />
        <SideGrid $rowHeight={21} $after={2}>
          <ToolButton $pressed><InfoIcon /></ToolButton>
          {SIDE_TOP.map((icon, i) => <ToolButton key={i}>{icon}</ToolButton>)}
        </SideGrid>
        <SideSep />
        <SideGrid $rowHeight={22}>
          {SIDE_EDIT.map((icon, i) => <ToolButton key={i}>{icon}</ToolButton>)}
        </SideGrid>
        <SideSep />
        <SideGrid $rowHeight={22}>
          {SIDE_DRAW.map((icon, i) => <ToolButton key={i}>{icon}</ToolButton>)}
        </SideGrid>
        <SideSep />
      </SideBar>
      <DrawColumn>
        <CommandRow>
          <CoordBox $width={142}>0.1 inch (-1.7 0.8)</CoordBox>
          <CoordBox $width={14} />
          <CommandInput />
          <ArrowButton $h={18}><Arrow $dir="down" /></ArrowButton>
        </CommandRow>
        <CanvasRow>
          <Canvas>
            <Schematic />
            <PropertiesDialog />
          </Canvas>
          <VScroll>
            <ArrowButton><Arrow $dir="up" /></ArrowButton>
            <VThumb />
            <ScrollFill />
            <ArrowButton><Arrow $dir="down" /></ArrowButton>
          </VScroll>
        </CanvasRow>
        <HScroll>
          <ArrowButton $h={17}><Arrow $dir="left" /></ArrowButton>
          <HThumb />
          <ScrollFill />
          <ArrowButton $h={17}><Arrow $dir="right" /></ArrowButton>
        </HScroll>
      </DrawColumn>
    </MainArea>
    <StatusBar>
      <Ico $size={5}><path d="M8 0l7 8-7 8-7-8z" fill="#222" /></Ico>
      Left-click to select object to get info for
    </StatusBar>
    <TaskBar>
      <StartButton><FlagIcon />Start</StartButton>
      <QuickLaunch>
        <FirefoxIcon />
        <MailIcon />
        <PageIcon />
      </QuickLaunch>
      <TaskButton>
        <FirefoxIcon />
        <TaskLabel><b>6</b> Firefox</TaskLabel>
        <Arrow $dir="down" />
      </TaskButton>
      <TaskButton><ControlIcon /><TaskLabel>Control Panel - C:\Progr...</TaskLabel></TaskButton>
      <TaskButton $active><EagleIcon /><TaskLabel>1 Library - C:\Progra...</TaskLabel></TaskButton>
      <TaskButton><MediaIcon /><TaskLabel>Windows Media Player</TaskLabel></TaskButton>
      <TaskButton><FoxitIcon /><TaskLabel>39632D-1.pdf - Foxit Re...</TaskLabel></TaskButton>
      <Tray>
        <TrayChevron>«</TrayChevron>
        <SignalIcon />
        <MeterIcon />
        <NetIcon />
        <Clock>9:53 AM</Clock>
      </Tray>
    </TaskBar>
  </Screen>
);

export default App;
